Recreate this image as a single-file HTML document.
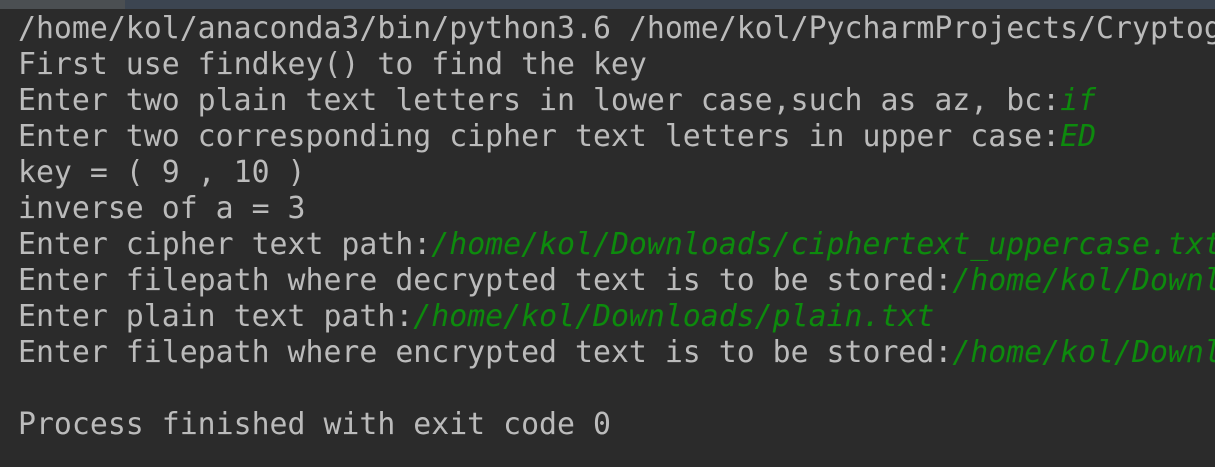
<!DOCTYPE html><html><head><style>
body{margin:0;width:1215px;height:467px;background:#2b2b2b;overflow:hidden;position:relative}
.top{position:absolute;left:0;top:0;width:1215px;height:9px;background:#3c4551}
.tab{position:absolute;left:0;top:0;width:125px;height:9px;background:#4b4f52}
.w{position:absolute;left:0;top:0;width:1215px;height:467px;overflow:hidden}
pre{margin:0;position:absolute;left:18px;top:11px;font-family:"DejaVu Sans Mono","Liberation Mono",monospace;font-size:29.85px;line-height:36px;color:#bbbbbb;white-space:pre}
i{color:#0d8a0d;font-style:italic}
</style></head><body>
<div class="top"></div><div class="tab"></div>
<div class="w"><pre>/home/kol/anaconda3/bin/python3.6 /home/kol/PycharmProjects/Cryptography
First use findkey() to find the key
Enter two plain text letters in lower case,such as az, bc:<i>if</i>
Enter two corresponding cipher text letters in upper case:<i>ED</i>
key = ( 9 , 10 )
inverse of a = 3
Enter cipher text path:<i>/home/kol/Downloads/ciphertext_uppercase.txt</i>
Enter filepath where decrypted text is to be stored:<i>/home/kol/Downloads/</i>
Enter plain text path:<i>/home/kol/Downloads/plain.txt</i>
Enter filepath where encrypted text is to be stored:<i>/home/kol/Downloads/</i>

Process finished with exit code 0</pre></div>
</body></html>
